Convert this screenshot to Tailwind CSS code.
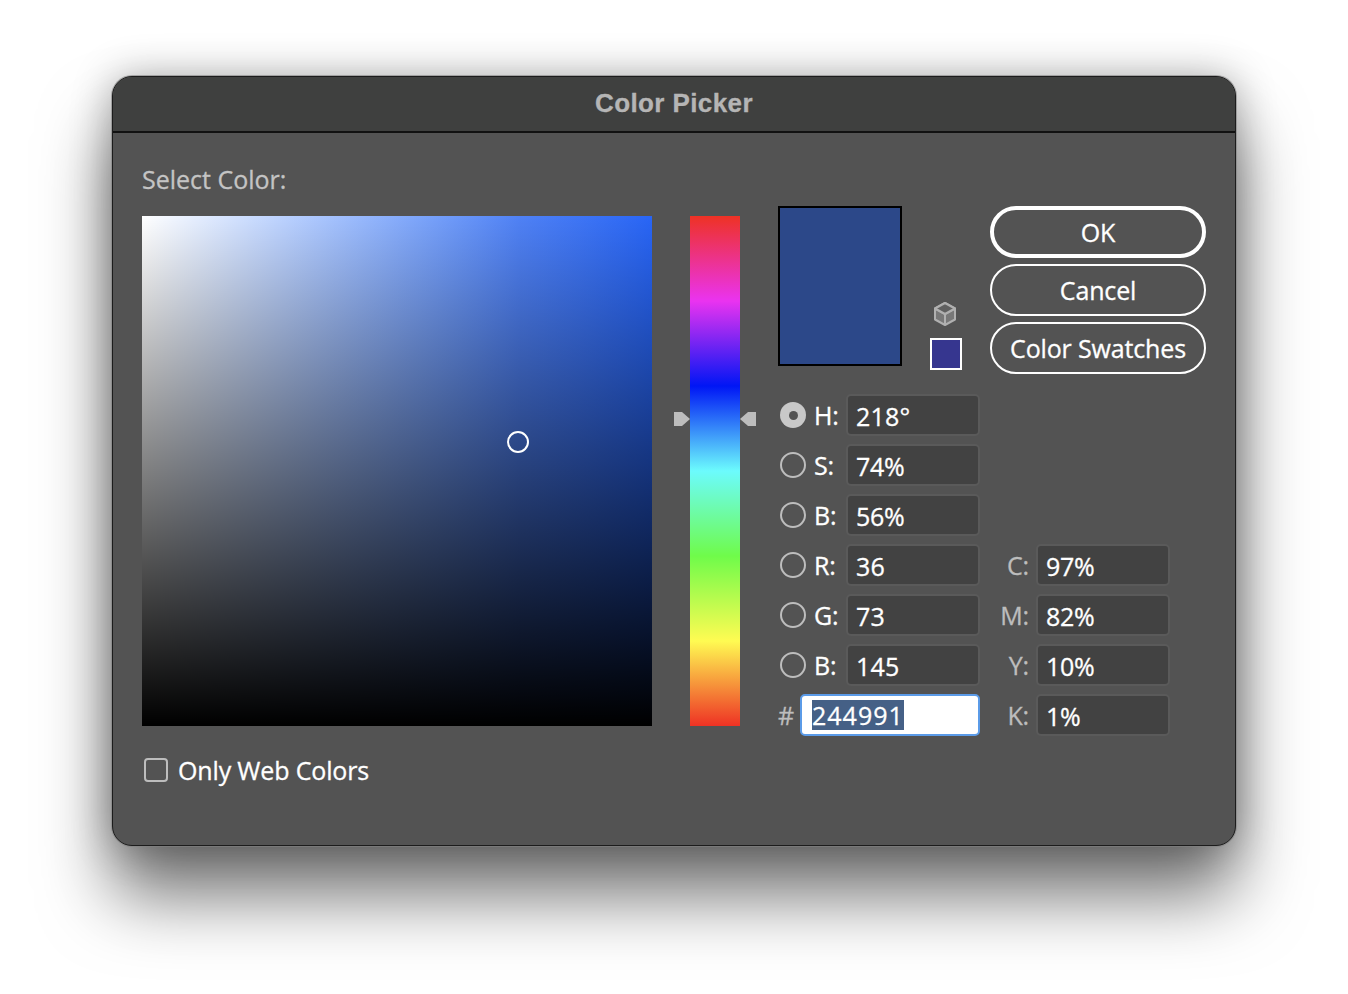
<!DOCTYPE html>
<html lang="en">
  <head>
    <meta charset="UTF-8" />
    <title>Color Picker</title>
    <script src="https://cdn.jsdelivr.net/npm/@tailwindcss/browser@4"></script>
  </head>
  <body class="bg-white h-[994px] w-[1348px] overflow-hidden pt-[76px] pl-[112px] font-['Open_Sans',sans-serif] font-medium tracking-[-0.15px] [-webkit-text-stroke:0.3px]">
    <div class="w-[1124px] h-[770px] rounded-[20px] bg-[#535353] border border-[#1c1c1c] shadow-[0_0_0_1px_rgba(130,130,130,0.6),0_50px_70px_rgba(0,0,0,0.55),0_0_40px_rgba(0,0,0,0.3)] overflow-hidden">
      <!-- title bar -->
      <div class="h-[56px] pb-[2px] bg-[#3f403f] border-b-2 border-[#111] flex items-center justify-center text-[26px] font-bold font-['Liberation_Sans',sans-serif] text-[#b5b5b5] tracking-[0.4px]">
        Color Picker
      </div>

      <div class="flex pl-[29px]">
        <!-- left: colour field -->
        <div class="w-[510px]">
          <div class="h-[83px] pt-[29px] text-[25px] leading-[34px] text-[#c4c4c4] tracking-normal">Select Color:</div>
          <div class="relative w-[510px] h-[510px] bg-linear-to-r from-white via-[#4f81f5] via-74% to-[#2865f6]">
            <div class="w-full h-full bg-linear-to-b from-transparent to-black"></div>
            <div class="absolute left-[365px] top-[215px] w-[22px] h-[22px] rounded-full border-2 border-white"></div>
          </div>
          <div class="flex items-center mt-[32px] h-[24px] pl-[2px]">
            <div class="w-[24px] h-[24px] rounded-[4px] border-2 border-[#bdbdbd]"></div>
            <span class="ml-[10px] mt-[2px] text-[25px] text-white">Only Web Colors</span>
          </div>
        </div>

        <!-- hue slider -->
        <div class="relative ml-[38px] mt-[83px] w-[50px] h-[510px] bg-[linear-gradient(to_bottom,#ee3224_0%,#ea33f0_16.67%,#0016f5_33.33%,#6cfbfd_50%,#6ffb4a_66.67%,#fffb52_83.33%,#ee3224_100%)]">
          <svg class="absolute left-[-16px] top-[196px]" width="16" height="14" viewBox="0 0 16 14"><path d="M0 0H8L16 7L8 14H0Z" fill="#bdbdbd" /></svg>
          <svg class="absolute right-[-16px] top-[196px]" width="16" height="14" viewBox="0 0 16 14"><path d="M16 0H8L0 7L8 14H16Z" fill="#bdbdbd" /></svg>
        </div>

        <!-- right column -->
        <div class="ml-[38px] w-[428px] pt-[73px]">
          <div class="flex h-[188px]">
            <div class="w-[124px] h-[160px] border-2 border-black bg-[#2c4889]"></div>
            <div class="w-[88px] flex flex-col items-center pt-[96px]">
              <svg class="ml-[-2px]" width="22" height="24" viewBox="0 0 22 24">
                <path d="M11 1L21 6.5V17.5L11 23L1 17.5V6.5Z" fill="#787878" stroke="#b0b0b0" stroke-width="2" stroke-linejoin="round" />
                <path d="M1 6.5L11 12L21 6.5M11 12V23" fill="none" stroke="#b0b0b0" stroke-width="2" />
                <path d="M11 1L21 6.5L11 12L1 6.5Z" fill="#606060" stroke="#b0b0b0" stroke-width="2" stroke-linejoin="round" />
              </svg>
              <div class="mt-[12px] w-[32px] h-[32px] border-2 border-white bg-[#36368f]"></div>
            </div>
            <div class="w-[216px] flex flex-col gap-[6px] text-[25px] text-white">
              <div class="h-[52px] pt-[2px] rounded-full border-[4px] border-white flex items-center justify-center">OK</div>
              <div class="h-[52px] pt-[2px] rounded-full border-2 border-white flex items-center justify-center">Cancel</div>
              <div class="h-[52px] pt-[2px] rounded-full border-2 border-white flex items-center justify-center">Color Swatches</div>
            </div>
          </div>

          <div class="flex flex-col gap-[8px] text-[25px] text-white">
            <div class="flex items-center h-[42px]">
              <div class="ml-[2px] w-[26px] h-[26px] rounded-full bg-[#c8c8c8] flex items-center justify-center"><div class="w-[9px] h-[9px] rounded-full bg-[#535353]"></div></div>
              <span class="ml-[8px] w-[32px] pt-[2px]">H:</span>
              <div class="w-[134px] h-[42px] rounded-[5px] bg-[#424242] border-2 border-[#5a5a5a] pl-[8px] leading-[40px] tracking-[0.2px]">218°</div>
            </div>
            <div class="flex items-center h-[42px]">
              <div class="ml-[2px] w-[26px] h-[26px] rounded-full border-2 border-[#bdbdbd]"></div>
              <span class="ml-[8px] w-[32px] pt-[2px]">S:</span>
              <div class="w-[134px] h-[42px] rounded-[5px] bg-[#424242] border-2 border-[#5a5a5a] pl-[8px] leading-[40px] tracking-[-0.3px]">74%</div>
            </div>
            <div class="flex items-center h-[42px]">
              <div class="ml-[2px] w-[26px] h-[26px] rounded-full border-2 border-[#bdbdbd]"></div>
              <span class="ml-[8px] w-[32px] pt-[2px]">B:</span>
              <div class="w-[134px] h-[42px] rounded-[5px] bg-[#424242] border-2 border-[#5a5a5a] pl-[8px] leading-[40px] tracking-[-0.3px]">56%</div>
            </div>
            <div class="flex items-center h-[42px]">
              <div class="ml-[2px] w-[26px] h-[26px] rounded-full border-2 border-[#bdbdbd]"></div>
              <span class="ml-[8px] w-[32px] pt-[2px]">R:</span>
              <div class="w-[134px] h-[42px] rounded-[5px] bg-[#424242] border-2 border-[#5a5a5a] pl-[8px] leading-[40px] tracking-[0.2px]">36</div>
              <span class="w-[50px] pt-[2px] pr-[1px] text-right text-[#bdbdbd]">C:</span>
              <div class="ml-[6px] w-[134px] h-[42px] rounded-[5px] bg-[#424242] border-2 border-[#5a5a5a] pl-[8px] leading-[40px] tracking-[-0.3px]">97%</div>
            </div>
            <div class="flex items-center h-[42px]">
              <div class="ml-[2px] w-[26px] h-[26px] rounded-full border-2 border-[#bdbdbd]"></div>
              <span class="ml-[8px] w-[32px] pt-[2px]">G:</span>
              <div class="w-[134px] h-[42px] rounded-[5px] bg-[#424242] border-2 border-[#5a5a5a] pl-[8px] leading-[40px] tracking-[0.2px]">73</div>
              <span class="w-[50px] pt-[2px] pr-[1px] text-right text-[#bdbdbd]">M:</span>
              <div class="ml-[6px] w-[134px] h-[42px] rounded-[5px] bg-[#424242] border-2 border-[#5a5a5a] pl-[8px] leading-[40px] tracking-[-0.3px]">82%</div>
            </div>
            <div class="flex items-center h-[42px]">
              <div class="ml-[2px] w-[26px] h-[26px] rounded-full border-2 border-[#bdbdbd]"></div>
              <span class="ml-[8px] w-[32px] pt-[2px]">B:</span>
              <div class="w-[134px] h-[42px] rounded-[5px] bg-[#424242] border-2 border-[#5a5a5a] pl-[8px] leading-[40px] tracking-[0.2px]">145</div>
              <span class="w-[50px] pt-[2px] pr-[1px] text-right text-[#bdbdbd]">Y:</span>
              <div class="ml-[6px] w-[134px] h-[42px] rounded-[5px] bg-[#424242] border-2 border-[#5a5a5a] pl-[8px] leading-[40px] tracking-[-0.3px]">10%</div>
            </div>
            <div class="flex items-center h-[42px]">
              <span class="w-[22px] pt-[2px] text-[#bdbdbd]">#</span>
              <div class="w-[180px] h-[42px] rounded-[5px] bg-white border-2 border-[#5b9be8] pl-[10px] flex items-center">
                <span class="bg-[#456086] text-white leading-[30px] tracking-[1px]">244991</span>
              </div>
              <span class="w-[50px] pt-[2px] pr-[1px] text-right text-[#bdbdbd]">K:</span>
              <div class="ml-[6px] w-[134px] h-[42px] rounded-[5px] bg-[#424242] border-2 border-[#5a5a5a] pl-[8px] leading-[40px] tracking-[-0.3px]">1%</div>
            </div>
          </div>
        </div>
      </div>
    </div>
  </body>
</html>
